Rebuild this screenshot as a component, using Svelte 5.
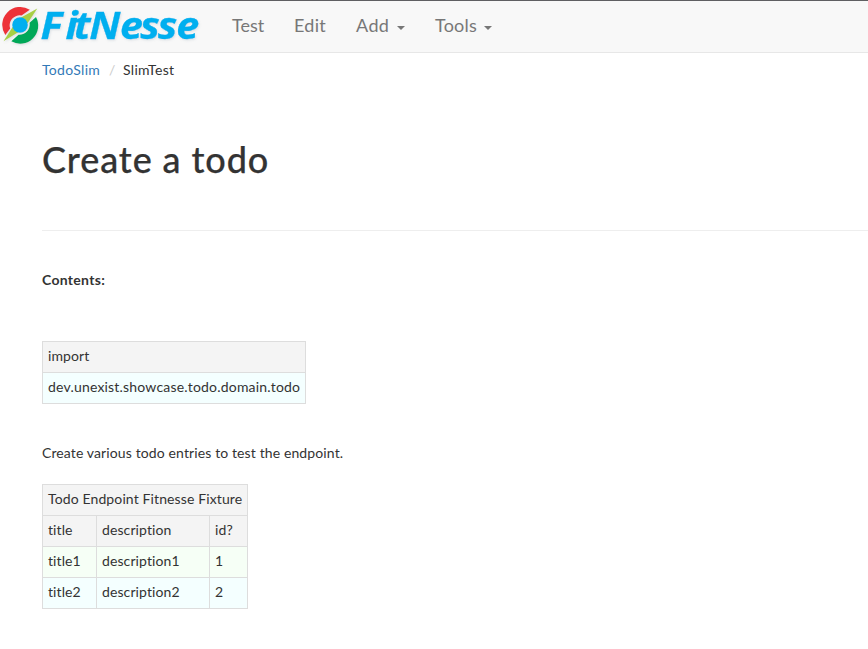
<script>
  const menu = [
    { label: 'Test', cls: 'test' },
    { label: 'Edit', cls: 'edit' },
    { label: 'Add', cls: 'add', caret: true },
    { label: 'Tools', cls: 'tools', caret: true },
  ];
</script>

<nav>
  <svg class="logo" width="210" height="51" viewBox="0 1 210 51" role="img" aria-label="FitNesse">
    <defs>
      <filter id="shade" x="-5%" y="-10%" width="115%" height="130%">
        <feDropShadow dx="0.8" dy="1.2" stdDeviation="0.8" flood-color="#789" flood-opacity=".22" />
      </filter>
    </defs>
    <g filter="url(#shade)">
      <path d="M29.8 9.7A18 18 0 0 0 5.3 35L10.2 28.6A10 10 0 0 1 21.5 15.5Z" fill="#ed3237" />
      <path d="M36 17A18 18 0 0 1 11.3 41.3L18.5 34.8A10.5 10.5 0 0 0 29.6 22.8Z" fill="#00a859" />
      <path d="M37.3 8.5L28 22.5L18.5 32L3.5 41.3L12.3 27.5L21.5 17.3Z" fill="#a8cf45" />
      <circle cx="20" cy="25" r="7.8" fill="#00afef" />
      <text transform="translate(40.5 39.2) scale(1.1 1)" x="0 22.8 30.3 44.3 72.2 90.6 106.7 123.3">FitNesse</text>
    </g>
  </svg>
  {#each menu as item}
    <a class={item.cls} href="#top"><span>{item.label}</span>{#if item.caret}<i class="caret"></i>{/if}</a>
  {/each}
</nav>

<main>
  <div class="crumbs"><a class="parent" href="#top">TodoSlim</a><span class="slash">/</span><span class="current">SlimTest</span></div>
  <h1>Create a todo</h1>
  <hr />
  <strong>Contents:</strong>

  <table class="import">
    <tbody>
      <tr class="head"><td>import</td></tr>
      <tr class="blue"><td><span class="package">dev.unexist.showcase.todo.domain.todo</span></td></tr>
    </tbody>
  </table>

  <p>Create various todo entries to test the endpoint.</p>

  <table class="fixture">
    <colgroup><col style="width:54px" /><col style="width:113px" /><col style="width:38px" /></colgroup>
    <tbody>
      <tr class="head"><td colspan="3"><span class="name">Todo Endpoint Fitnesse Fixture</span></td></tr>
      <tr class="head"><td>title</td><td>description</td><td>id?</td></tr>
      <tr class="green"><td>title1</td><td>description1</td><td>1</td></tr>
      <tr class="blue"><td>title2</td><td>description2</td><td>2</td></tr>
    </tbody>
  </table>
</main>

<style>
  :global(body) {
    margin: 0;
    background: #fff;
    color: #333;
    font: 14px/20px Lato, "Liberation Sans", sans-serif;
    font-variant-ligatures: none;
  }
  a { text-decoration: none; }
  nav {
    display: flex;
    box-sizing: border-box;
    height: 53px;
    border-top: 1px solid #5f5f62;
    border-bottom: 1px solid #e7e7e7;
    background: #f8f8f8;
  }
  .logo { flex: none; margin-right: 22px; overflow: visible; }
  .logo text {
    font: italic bold 37.5px "Open Sans", sans-serif;
    fill: #00afef;
    stroke: #00afef;
    stroke-width: .3px;
  }
  nav a {
    display: flex;
    align-items: center;
    height: 49px;
    color: #777;
    font-size: 18px;
    white-space: nowrap;
  }
  nav a span { position: relative; top: -0.5px; }
  .test { width: 62px; }
  .edit { width: 62px; letter-spacing: .3px; }
  .add { width: 79px; letter-spacing: .4px; }
  .tools { letter-spacing: .2px; }
  .caret {
    margin: 4px 0 0 7px;
    border: 4px solid transparent;
    border-top-color: #777;
    border-bottom: 0;
  }
  .add .caret { margin-left: 7.5px; }
  main { padding: 7px 0 0 42px; }
  .crumbs { display: flex; height: 20px; letter-spacing: .3px; }
  .parent { width: 67px; color: #337ab7; }
  .slash { width: 14px; color: #ccc; }
  h1 {
    margin: 59px 0 0;
    height: 41px;
    font-size: 36px;
    line-height: 40px;
    font-weight: 500;
    letter-spacing: .9px;
    -webkit-text-stroke: .25px #333;
  }
  hr { margin: 50px 0 39px; border: 0; border-top: 1px solid #eee; }
  strong { display: block; height: 21px; letter-spacing: .3px; }
  table {
    border-collapse: collapse;
    table-layout: fixed;
  }
  td {
    box-sizing: border-box;
    height: 31px;
    padding: 4px 5px 6px;
    border: 1px solid #ddd;
    white-space: nowrap;
    letter-spacing: .1px;
  }
  .import { width: 264px; margin-top: 50px; }
  .package { letter-spacing: .19px; }
  .name { letter-spacing: .12px; }
  .fixture { width: 206px; }
  .head { background: #f4f4f4; }
  .blue { background: #f4ffff; }
  .green { background: #f6fff6; }
  p { margin: 39px 0 21px; letter-spacing: .12px; }
</style>
